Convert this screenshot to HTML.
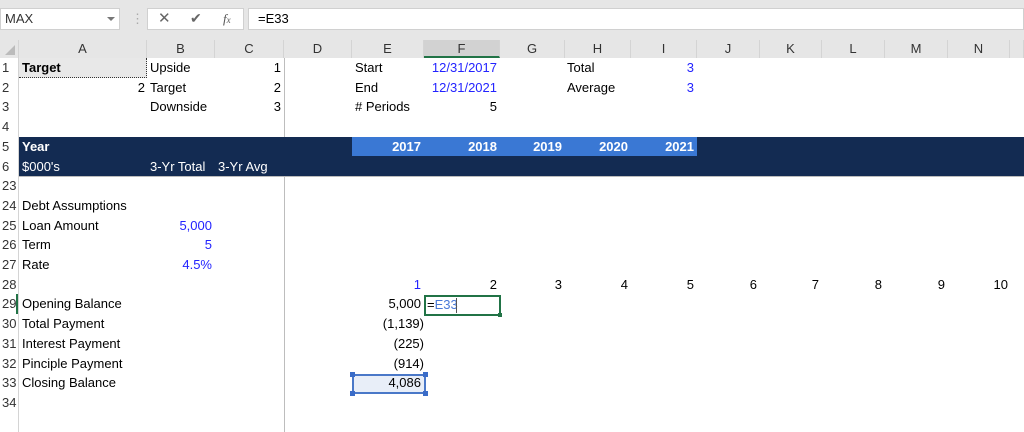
<!DOCTYPE html>
<html><head><style>
*{margin:0;padding:0;box-sizing:border-box}
body{width:1024px;height:432px;overflow:hidden;background:#fff;font-family:"Liberation Sans",sans-serif;font-size:13px;color:#000;position:relative}
.a{position:absolute;white-space:nowrap;line-height:19.7px;height:19.7px}
.r{text-align:right}
.c{text-align:center}
.b{font-weight:bold}
.bl{color:#2323ff}
.w{color:#fff}
.hd{position:absolute;top:40px;height:18px;line-height:18px;text-align:center;color:#333;font-size:13px;border-right:1px solid #d4d4d4;background:#e6e6e6}
.rh{position:absolute;left:0;width:18px;height:19.7px;line-height:19.7px;color:#333;text-align:left;padding-left:2px;background:#fff}
</style></head><body>
<div style="position:absolute;left:0;top:0;width:1024px;height:40px;background:#e6e6e6"></div>
<div style="position:absolute;left:0;top:8px;width:120px;height:22px;background:#fff;border:1px solid #d0d0d0"></div>
<div class="a" style="left:5px;top:9px;color:#333">MAX</div>
<div style="position:absolute;left:107px;top:17px;border-left:4px solid transparent;border-right:4px solid transparent;border-top:4px solid #777"></div>
<div class="a" style="left:131px;top:9px;color:#aaa">⋮</div>
<div style="position:absolute;left:147px;top:8px;width:97px;height:22px;background:#fff;border:1px solid #d0d0d0"></div>
<div class="a" style="left:158px;top:9px;color:#666;font-size:15px">✕</div>
<div class="a" style="left:190px;top:9px;color:#666;font-size:14px">✔</div>
<div class="a" style="left:223px;top:9px;color:#555;font-style:italic;font-family:'Liberation Serif',serif">f<span style="font-size:9px">x</span></div>
<div style="position:absolute;left:248px;top:8px;width:776px;height:22px;background:#fff;border:1px solid #d0d0d0"></div>
<div class="a" style="left:258px;top:9px">=E33</div>
<div class="hd" style="left:0;width:19px"></div>
<div style="position:absolute;left:5px;top:45px;border-left:10px solid transparent;border-bottom:10px solid #bbb"></div>
<div class="hd" style="left:19px;width:128px">A</div>
<div class="hd" style="left:147px;width:68px">B</div>
<div class="hd" style="left:215px;width:69px">C</div>
<div class="hd" style="left:284px;width:68px">D</div>
<div class="hd" style="left:352px;width:72px">E</div>
<div class="hd" style="left:424px;width:76px;background:#d2d2d2;border-bottom:2px solid #217346">F</div>
<div class="hd" style="left:500px;width:65px">G</div>
<div class="hd" style="left:565px;width:66px">H</div>
<div class="hd" style="left:631px;width:66px">I</div>
<div class="hd" style="left:697px;width:63px">J</div>
<div class="hd" style="left:760px;width:62px">K</div>
<div class="hd" style="left:822px;width:63px">L</div>
<div class="hd" style="left:885px;width:63px">M</div>
<div class="hd" style="left:948px;width:62px">N</div>
<div class="hd" style="left:1010px;width:14px"></div>
<div style="position:absolute;left:18px;top:58px;width:1px;height:374px;background:#d4d4d4"></div>
<div class="rh" style="top:58px">1</div>
<div class="rh" style="top:77.7px">2</div>
<div class="rh" style="top:97.4px">3</div>
<div class="rh" style="top:117.1px">4</div>
<div class="rh" style="top:136.8px">5</div>
<div class="rh" style="top:156.5px">6</div>
<div class="rh" style="top:176.2px">23</div>
<div class="rh" style="top:195.9px">24</div>
<div class="rh" style="top:215.6px">25</div>
<div class="rh" style="top:235.3px">26</div>
<div class="rh" style="top:255px">27</div>
<div class="rh" style="top:274.7px">28</div>
<div class="rh" style="top:294.4px;border-right:2px solid #217346">29</div>
<div class="rh" style="top:314.1px">30</div>
<div class="rh" style="top:333.8px">31</div>
<div class="rh" style="top:353.5px">32</div>
<div class="rh" style="top:373.2px">33</div>
<div class="rh" style="top:392.9px">34</div>
<div style="position:absolute;left:284px;top:58px;width:1px;height:374px;background:#bdbdbd"></div>
<div style="position:absolute;left:19px;top:58px;width:128px;height:20px;background:#e8e8e8;border-right:1px dotted #333;border-bottom:1px dotted #333"></div>
<div style="position:absolute;left:19px;top:136.8px;width:1005px;height:39.4px;background:#132b52"></div>
<div style="position:absolute;left:19px;top:176.2px;width:1005px;height:1px;background:#bbb"></div>
<div style="position:absolute;left:352px;top:136.8px;width:345px;height:19.7px;background:#3a78d4"></div>
<div class="a b" style="left:22px;top:58px">Target</div>
<div class="a" style="left:150px;top:58px">Upside</div>
<div class="a r" style="left:215px;width:66px;top:58px">1</div>
<div class="a r" style="left:19px;width:126px;top:77.7px">2</div>
<div class="a" style="left:150px;top:77.7px">Target</div>
<div class="a r" style="left:215px;width:66px;top:77.7px">2</div>
<div class="a" style="left:150px;top:97.4px">Downside</div>
<div class="a r" style="left:215px;width:66px;top:97.4px">3</div>
<div class="a" style="left:355px;top:58px">Start</div>
<div class="a r bl" style="left:400px;width:97px;top:58px">12/31/2017</div>
<div class="a" style="left:355px;top:77.7px">End</div>
<div class="a r bl" style="left:400px;width:97px;top:77.7px">12/31/2021</div>
<div class="a" style="left:355px;top:97.4px"># Periods</div>
<div class="a r" style="left:400px;width:97px;top:97.4px">5</div>
<div class="a" style="left:567px;top:58px">Total</div>
<div class="a r bl" style="left:631px;width:63px;top:58px">3</div>
<div class="a" style="left:567px;top:77.7px">Average</div>
<div class="a r bl" style="left:631px;width:63px;top:77.7px">3</div>
<div class="a b w" style="left:22px;top:136.8px">Year</div>
<div class="a w" style="left:22px;top:156.5px">$000's</div>
<div class="a w" style="left:150px;top:156.5px">3-Yr Total</div>
<div class="a w" style="left:218px;top:156.5px">3-Yr Avg</div>
<div class="a r b w" style="left:352px;width:69px;top:136.8px">2017</div>
<div class="a r b w" style="left:424px;width:73px;top:136.8px">2018</div>
<div class="a r b w" style="left:500px;width:62px;top:136.8px">2019</div>
<div class="a r b w" style="left:565px;width:63px;top:136.8px">2020</div>
<div class="a r b w" style="left:631px;width:63px;top:136.8px">2021</div>
<div class="a" style="left:22px;top:195.9px">Debt Assumptions</div>
<div class="a" style="left:22px;top:215.6px">Loan Amount</div>
<div class="a r bl" style="left:147px;width:65px;top:215.6px">5,000</div>
<div class="a" style="left:22px;top:235.3px">Term</div>
<div class="a r bl" style="left:147px;width:65px;top:235.3px">5</div>
<div class="a" style="left:22px;top:255px">Rate</div>
<div class="a r bl" style="left:147px;width:65px;top:255px">4.5%</div>
<div class="a r bl" style="left:352px;width:69px;top:274.7px">1</div>
<div class="a r" style="left:424px;width:73px;top:274.7px">2</div>
<div class="a r" style="left:500px;width:62px;top:274.7px">3</div>
<div class="a r" style="left:565px;width:63px;top:274.7px">4</div>
<div class="a r" style="left:631px;width:63px;top:274.7px">5</div>
<div class="a r" style="left:697px;width:60px;top:274.7px">6</div>
<div class="a r" style="left:760px;width:59px;top:274.7px">7</div>
<div class="a r" style="left:822px;width:60px;top:274.7px">8</div>
<div class="a r" style="left:885px;width:60px;top:274.7px">9</div>
<div class="a r" style="left:948px;width:60px;top:274.7px">10</div>
<div class="a" style="left:22px;top:294.4px">Opening Balance</div>
<div class="a" style="left:22px;top:314.1px">Total Payment</div>
<div class="a" style="left:22px;top:333.8px">Interest Payment</div>
<div class="a" style="left:22px;top:353.5px">Pinciple Payment</div>
<div class="a" style="left:22px;top:373.2px">Closing Balance</div>
<div class="a r" style="left:352px;width:69px;top:294.4px">5,000</div>
<div class="a r" style="left:352px;width:72px;top:314.1px">(1,139)</div>
<div class="a r" style="left:352px;width:72px;top:333.8px">(225)</div>
<div class="a r" style="left:352px;width:72px;top:353.5px">(914)</div>
<div style="position:absolute;left:352px;top:374px;width:74px;height:20px;background:#e8eef8;border:2px solid #4a78c8"></div>
<div style="position:absolute;left:350px;top:372px;width:5px;height:5px;background:#3a6cc8"></div>
<div style="position:absolute;left:423px;top:372px;width:5px;height:5px;background:#3a6cc8"></div>
<div style="position:absolute;left:350px;top:391px;width:5px;height:5px;background:#3a6cc8"></div>
<div style="position:absolute;left:423px;top:391px;width:5px;height:5px;background:#3a6cc8"></div>
<div class="a r" style="left:352px;width:69px;top:373.2px">4,086</div>
<div style="position:absolute;left:424px;top:294.5px;width:77px;height:21px;border:2px solid #217346;background:#fff"></div>
<div style="position:absolute;left:498px;top:313px;width:4px;height:4px;background:#217346"></div>
<div class="a" style="left:427px;top:295px">=<span style="color:#4a7ad8">E33</span></div>
<div style="position:absolute;left:456px;top:298px;width:1px;height:15px;background:#555"></div>
</body></html>
